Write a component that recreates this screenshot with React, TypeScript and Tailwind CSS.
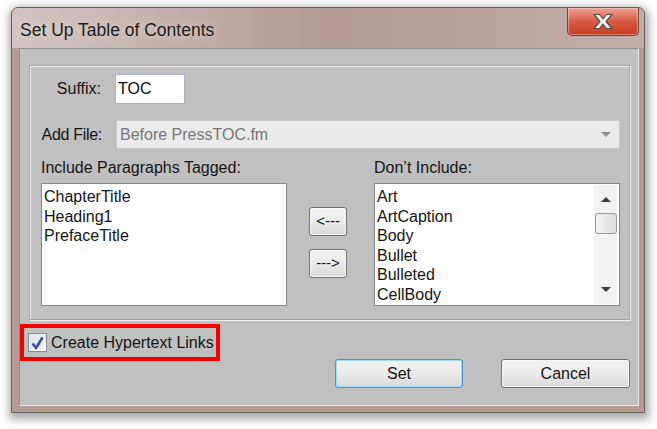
import React from "react";

const includeItems = ["ChapterTitle", "Heading1", "PrefaceTitle"];
const excludeItems = ["Art", "ArtCaption", "Body", "Bullet", "Bulleted", "CellBody"];

function ListBox({ items, scroll }: { items: string[]; scroll?: boolean }) {
    return (
        <div className="flex h-[123px] w-[246px] overflow-hidden border border-[#82878f] bg-white">
            <div className="flex-1 pl-[2px] pt-[3px] text-[16px] leading-[19.5px] text-[#141414]">
                {items.map((item) => (
                    <div key={item} className="whitespace-nowrap">
                        {item}
                    </div>
                ))}
            </div>
            {scroll && (
                <div className="my-[1px] mr-[2px] flex w-[23px] flex-col items-center bg-[#f3f3f3]">
                    <div className="flex h-[28px] items-center justify-center pt-[1px]">
                        <div className="h-0 w-0 border-x-[5px] border-b-[5px] border-x-transparent border-b-[#3c3c3c]" />
                    </div>
                    <div className="h-[21px] w-[22px] rounded-[3px] border border-[#9a9a9a] bg-gradient-to-r from-[#f4f4f4] to-[#dcdcdc]" />
                    <div className="flex-1" />
                    <div className="flex h-[28px] items-center justify-center pb-[2px]">
                        <div className="h-0 w-0 border-x-[5px] border-t-[5px] border-x-transparent border-t-[#3c3c3c]" />
                    </div>
                </div>
            )}
        </div>
    );
}

function PushButton({ label, width, focused, small }: { label: string; width: number; focused?: boolean; small?: boolean }) {
    return (
        <div
            className={`flex h-[29px] items-center justify-center rounded-[3px] border bg-gradient-to-b from-[#f3f3f3] via-[#ebebeb] to-[#d8d8d8] text-[#141414] ${
                focused
                    ? "border-[#3c9bd7] shadow-[inset_0_0_0_1px_#a7dcf6]"
                    : "border-[#707070] shadow-[inset_0_0_0_1px_#fbfbfb]"
            } ${small ? "text-[15px]" : "text-[16px]"}`}
            style={{ width }}
        >
            {label}
        </div>
    );
}

export default function App() {
    return (
        <div
            className="h-[429px] w-[657px] bg-white pl-[11px] pt-[7px]"
            style={{ fontFamily: '"Liberation Sans", Arial, sans-serif' }}
        >
            <div className="flex h-[406px] w-[634px] flex-col rounded-t-[7px] border border-[#6e5f5b] bg-[#b49b95] shadow-[1px_3px_9px_3px_rgba(0,0,0,0.35)]">
                {/* Title bar */}
                <div className="flex h-[40px] items-start justify-between rounded-t-[6px] bg-gradient-to-r from-[#d3c5c1] via-[#b39a94] to-[#c2aea9]">
                    <div className="mt-[11px] pl-[8px] text-[17.5px] leading-[22px] text-[#1c1c1c] [text-shadow:0_0_8px_#e8dedb]">
                        Set Up Table of Contents
                    </div>
                    <div className="mr-[5px] flex h-[28px] w-[72px] items-center justify-center rounded-b-[5px] border border-t-0 border-[#7a3f35] bg-gradient-to-b from-[#eba497] via-[#d75a44] to-[#c63a22] shadow-[inset_0_0_0_1px_rgba(255,220,210,0.45)]">
                        <svg width="22" height="17" viewBox="0 0 22 17">
                            <path
                                d="M2 1.5 H7.5 L11 6 L14.5 1.5 H20 L14 8.5 L20 15.5 H14.5 L11 11 L7.5 15.5 H2 L8 8.5 Z"
                                fill="#f7f7f7"
                                stroke="#5a4a48"
                                strokeWidth="1.2"
                                strokeLinejoin="round"
                            />
                        </svg>
                    </div>
                </div>

                {/* Client area */}
                <div className="mb-[6px] ml-[7px] mr-[5px] flex flex-1 flex-col border border-b-[#ececec] border-l-[#8c8c8c] border-r-[#ececec] border-t-[#8c8c8c] bg-[#c0c0c0]">
                    {/* Group box */}
                    <div className="ml-[9px] mr-[8px] mt-[16px] h-[255px] border border-[#a3a3a3] pl-[11px] pr-[9px] pt-[8px] shadow-[inset_1px_1px_0_#f2f2f2,1px_1px_0_#f2f2f2]">
                        <div className="flex items-center">
                            <div className="w-[61px] whitespace-nowrap pr-[1px] text-right text-[16px] text-[#141414]">Suffix:</div>
                            <div className="ml-[13px] flex h-[30px] w-[70px] items-center border border-[#a7b4c5] bg-white pl-[2px] text-[16px] text-[#0c0c0c]">
                                TOC
                            </div>
                        </div>
                        <div className="mt-[16px] flex items-center">
                            <div className="flex w-[61px] justify-end whitespace-nowrap text-[16px] tracking-[-0.3px] text-[#141414]">Add File:</div>
                            <div className="ml-[14px] flex h-[29px] flex-1 items-center justify-between rounded-[2px] border border-[#c9c9c9] bg-[#ebebeb] pl-[3px] pr-[8px] text-[16px] text-[#777777]">
                                <span>Before PressTOC.fm</span>
                                <div className="h-0 w-0 border-x-[5px] border-t-[5px] border-x-transparent border-t-[#8e8e8e]" />
                            </div>
                        </div>
                        <div className="mt-[9px] flex">
                            <div className="flex flex-col">
                                <div className="h-[20px] text-[16px] leading-[20px] text-[#141414]">Include Paragraphs Tagged:</div>
                                <div className="mt-[5px]">
                                    <ListBox items={includeItems} />
                                </div>
                            </div>
                            <div className="ml-[22px] mt-[49px] flex flex-col gap-[13px]">
                                <PushButton label="<---" width={38} small />
                                <PushButton label="--->" width={38} small />
                            </div>
                            <div className="ml-[27px] flex flex-col">
                                <div className="h-[20px] text-[16px] leading-[20px] text-[#141414]">Don’t Include:</div>
                                <div className="mt-[5px]">
                                    <ListBox items={excludeItems} scroll />
                                </div>
                            </div>
                        </div>
                    </div>

                    {/* Bottom */}
                    <div className="mr-[8px] mt-[4px] flex items-start">
                        <div className="flex h-[37px] w-[200px] items-center border-[4px] border-[#f40000] pl-[4px]">
                            <div className="flex h-[19px] w-[19px] items-center justify-center border border-[#8e8f8f] bg-gradient-to-br from-[#dce6f2] to-[#f5f8fc]">
                                <svg width="13" height="14" viewBox="0 0 13 14">
                                    <path d="M1.5 7.5 L5 12 L11.5 1.5" fill="none" stroke="#3b4fa8" strokeWidth="2.6" strokeLinejoin="round" />
                                </svg>
                            </div>
                            <span className="ml-[4px] whitespace-nowrap text-[16px] text-[#141414]">Create Hypertext Links</span>
                        </div>
                        <div className="ml-auto mt-[35px] flex gap-[38px]">
                            <PushButton label="Set" width={128} focused />
                            <PushButton label="Cancel" width={129} />
                        </div>
                    </div>
                </div>
            </div>
        </div>
    );
}
